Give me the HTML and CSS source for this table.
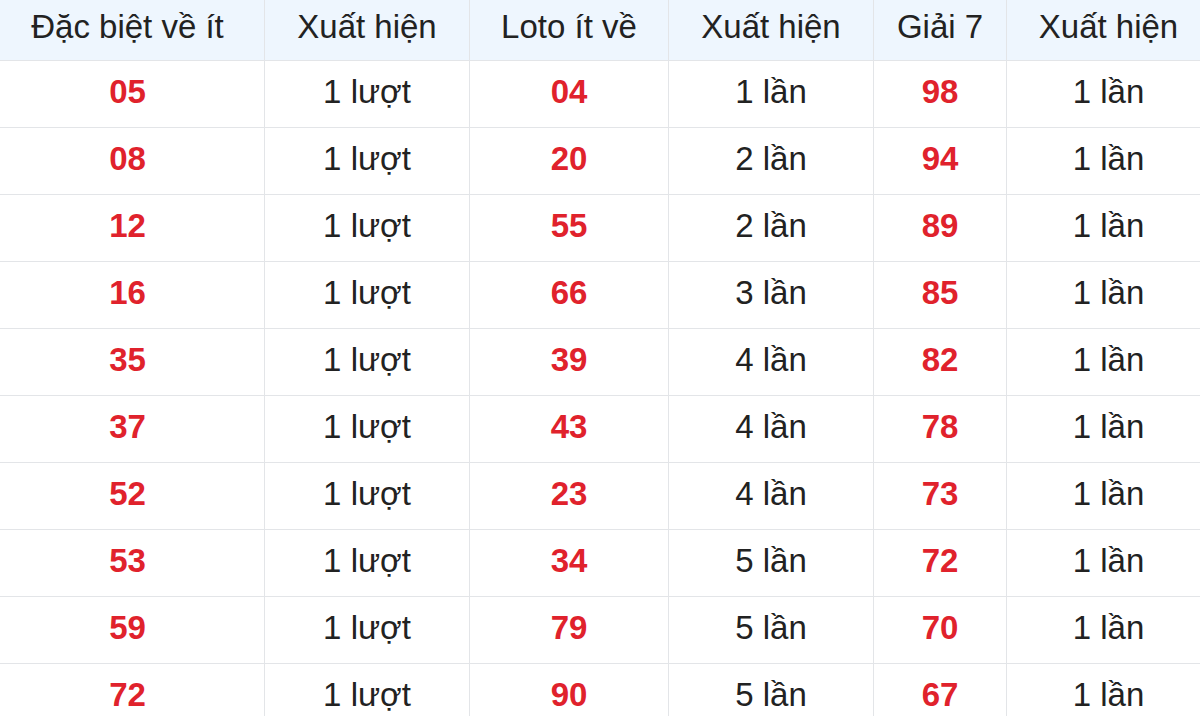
FILE: index.html
```html
<!DOCTYPE html>
<html lang="vi">
<head>
<meta charset="utf-8">
<title>Thống kê</title>
<link rel="stylesheet" href="styles.css">
</head>
<body>
<table class="stats">
  <colgroup>
    <col class="c1"><col class="c2"><col class="c3"><col class="c4"><col class="c5"><col class="c6">
  </colgroup>
  <thead>
    <tr>
      <th>Đặc biệt về ít</th><th>Xuất hiện</th><th>Loto ít về</th><th>Xuất hiện</th><th>Giải 7</th><th>Xuất hiện</th>
    </tr>
  </thead>
  <tbody>
    <tr><td class="num">05</td><td>1 lượt</td><td class="num">04</td><td>1 lần</td><td class="num">98</td><td>1 lần</td></tr>
    <tr><td class="num">08</td><td>1 lượt</td><td class="num">20</td><td>2 lần</td><td class="num">94</td><td>1 lần</td></tr>
    <tr><td class="num">12</td><td>1 lượt</td><td class="num">55</td><td>2 lần</td><td class="num">89</td><td>1 lần</td></tr>
    <tr><td class="num">16</td><td>1 lượt</td><td class="num">66</td><td>3 lần</td><td class="num">85</td><td>1 lần</td></tr>
    <tr><td class="num">35</td><td>1 lượt</td><td class="num">39</td><td>4 lần</td><td class="num">82</td><td>1 lần</td></tr>
    <tr><td class="num">37</td><td>1 lượt</td><td class="num">43</td><td>4 lần</td><td class="num">78</td><td>1 lần</td></tr>
    <tr><td class="num">52</td><td>1 lượt</td><td class="num">23</td><td>4 lần</td><td class="num">73</td><td>1 lần</td></tr>
    <tr><td class="num">53</td><td>1 lượt</td><td class="num">34</td><td>5 lần</td><td class="num">72</td><td>1 lần</td></tr>
    <tr><td class="num">59</td><td>1 lượt</td><td class="num">79</td><td>5 lần</td><td class="num">70</td><td>1 lần</td></tr>
    <tr><td class="num">72</td><td>1 lượt</td><td class="num">90</td><td>5 lần</td><td class="num">67</td><td>1 lần</td></tr>
  </tbody>
</table>
</body>
</html>
```

FILE: styles.css
```css
html, body {
  margin: 0;
  padding: 0;
  background: #ffffff;
  overflow: hidden;
}
body {
  font-family: "Liberation Sans", Arial, sans-serif;
  color: #222222;
}
.stats {
  font-family: "Liberation Sans", Arial, sans-serif;
  border-collapse: collapse;
  table-layout: fixed;
  width: 1220px;
  margin-left: -10px;
  margin-top: -1px;
}
.c1 { width: 274px; }
.c2 { width: 205px; }
.c3 { width: 199px; }
.c4 { width: 205px; }
.c5 { width: 133px; }
.c6 { width: 204px; }
.stats th,
.stats td {
  border: 1px solid #e3e5e8;
  padding: 0 0 5px 0;
  text-align: center;
  vertical-align: middle;
  font-size: 33px;
  line-height: 1;
}
.stats th {
  height: 53px;
  padding-bottom: 7px;
  font-weight: normal;
  background: #eef6fe;
  color: #222222;
}
.stats td {
  height: 61px;
}
.stats td.num {
  color: #e0222c;
  font-weight: bold;
}
```
